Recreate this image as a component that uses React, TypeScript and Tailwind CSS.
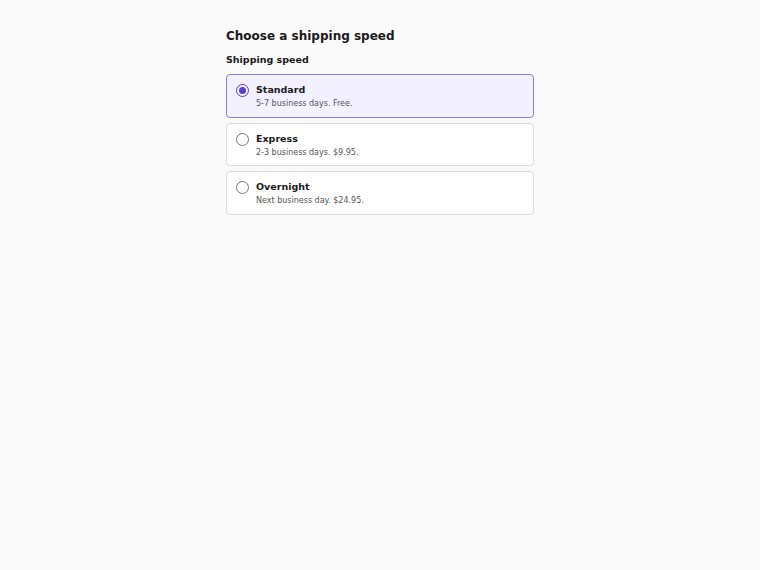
import { useState } from "react";

const OPTIONS = [
  { id: "standard", label: "Standard", detail: "5-7 business days. Free." },
  { id: "express", label: "Express", detail: "2-3 business days. $9.95." },
  { id: "overnight", label: "Overnight", detail: "Next business day. $24.95." },
];

export default function App() {
  const [speed, setSpeed] = useState("standard");

  return (
    <div className="min-h-[570px] bg-[#fafafa] font-['DejaVu_Sans',sans-serif] text-[#1a1a1a]">
      <div className="mx-auto w-[308px] pt-[28px]">
        <h1 className="text-[12px] font-bold leading-[16px]">Choose a shipping speed</h1>
        <div role="radiogroup" aria-label="Shipping speed" className="mt-[9px]">
          <div className="text-[9.5px] font-bold leading-[14px] mb-[7px]">Shipping speed</div>
          <div className="flex flex-col gap-[5px]">
            {OPTIONS.map((opt) => {
              const checked = speed === opt.id;
              return (
                <label
                  key={opt.id}
                  className={`flex items-start gap-[7px] rounded-[4px] border px-[9px] pt-[8px] pb-[6.5px] cursor-pointer ${
                    checked ? "border-[#8a7fd6] bg-[#f3f0ff]" : "border-[#dcdcdc] bg-white"
                  }`}
                >
                  <input
                    type="radio"
                    name="speed"
                    value={opt.id}
                    checked={checked}
                    onChange={() => setSpeed(opt.id)}
                    className="sr-only"
                  />
                  <span
                    className={`mt-[1px] flex h-[13px] w-[13px] shrink-0 items-center justify-center rounded-full border-[1.5px] ${
                      checked ? "border-[#5b3fd0]" : "border-[#777]"
                    }`}
                  >
                    {checked && <span className="h-[7px] w-[7px] rounded-full bg-[#5b3fd0]" />}
                  </span>
                  <span className="flex flex-col">
                    <span className="text-[9.5px] font-bold leading-[14px]">{opt.label}</span>
                    <span className="text-[8px] leading-[13px] text-[#555]">{opt.detail}</span>
                  </span>
                </label>
              );
            })}
          </div>
        </div>
      </div>
    </div>
  );
}
